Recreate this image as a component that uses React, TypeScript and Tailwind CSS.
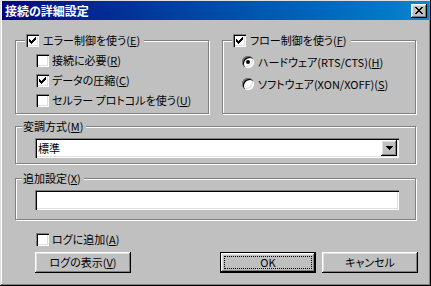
const sunken =
  "shadow-[inset_1px_1px_0_#808080,inset_2px_2px_0_#000,inset_-1px_-1px_0_#fff,inset_-2px_-2px_0_#dfdfdf]";
const raised =
  "shadow-[inset_-1px_-1px_0_#000,inset_1px_1px_0_#fff,inset_-2px_-2px_0_#808080,inset_2px_2px_0_#dfdfdf]";
const etched = "border border-[#808080] shadow-[inset_1px_1px_0_#fff,1px_1px_0_#fff]";

function Check({ checked }: { checked?: boolean }) {
  return (
    <span className={`w-[13px] h-[13px] shrink-0 bg-white flex items-center justify-center ${sunken}`}>
      {checked && (
        <svg width="7" height="7" viewBox="0 0 7 7" shapeRendering="crispEdges">
          <rect x="0" y="2" width="1" height="3" fill="#000" />
          <rect x="1" y="3" width="1" height="3" fill="#000" />
          <rect x="2" y="4" width="1" height="3" fill="#000" />
          <rect x="3" y="3" width="1" height="3" fill="#000" />
          <rect x="4" y="2" width="1" height="3" fill="#000" />
          <rect x="5" y="1" width="1" height="3" fill="#000" />
          <rect x="6" y="0" width="1" height="3" fill="#000" />
        </svg>
      )}
    </span>
  );
}

function Radio({ checked }: { checked?: boolean }) {
  return (
    <span className={`w-[12px] h-[12px] shrink-0 rounded-full bg-white flex items-center justify-center ${sunken}`}>
      {checked && <span className="w-[4px] h-[4px] rounded-full bg-black" />}
    </span>
  );
}

// letter with the mnemonic underline
function Mn({ k }: { k: string }) {
  return (
    <>
      (<u className="underline-offset-[1px]">{k}</u>)
    </>
  );
}

function Button({ children, isDefault }: { children: React.ReactNode; isDefault?: boolean }) {
  if (isDefault) {
    return (
      <div className="w-[96px] h-[21px] shrink-0 border border-black">
        <div className={`w-full h-full p-[3px] ${raised}`}>
          <div className="w-full h-full border border-dotted border-black flex items-center justify-center leading-none">
            {children}
          </div>
        </div>
      </div>
    );
  }
  return (
    <div className={`w-[96px] h-[21px] shrink-0 flex items-center justify-center leading-none ${raised}`}>
      {children}
    </div>
  );
}

export default function App() {
  return (
    <div className="w-[431px] h-[286px] bg-[#c0c0c0] text-black text-[11px] font-['Noto_Sans_CJK_JP',sans-serif] [font-feature-settings:'palt'] p-[2px] pt-[1px] shadow-[inset_-1px_-1px_0_#000,inset_1px_1px_0_#dfdfdf,inset_-2px_-2px_0_#808080,inset_2px_2px_0_#fff]">
      <div className="h-[19px] flex items-center pl-[3px] pr-[2px] bg-linear-to-r from-[#000080] to-[#1084d0]">
        <span className="text-white text-[12px] font-bold leading-none">接続の詳細設定</span>
        <div className={`ml-auto w-[16px] h-[14px] bg-[#c0c0c0] flex items-center justify-center ${raised}`}>
          <svg width="8" height="7" viewBox="0 0 8 7" shapeRendering="crispEdges">
            <rect x="0" y="0" width="2" height="1" fill="#000" />
            <rect x="6" y="0" width="2" height="1" fill="#000" />
            <rect x="1" y="1" width="2" height="1" fill="#000" />
            <rect x="5" y="1" width="2" height="1" fill="#000" />
            <rect x="2" y="2" width="4" height="1" fill="#000" />
            <rect x="3" y="3" width="2" height="1" fill="#000" />
            <rect x="2" y="4" width="4" height="1" fill="#000" />
            <rect x="1" y="5" width="2" height="1" fill="#000" />
            <rect x="5" y="5" width="2" height="1" fill="#000" />
            <rect x="0" y="6" width="2" height="1" fill="#000" />
            <rect x="6" y="6" width="2" height="1" fill="#000" />
          </svg>
        </div>
      </div>

      <div className="pl-[13px] pr-[13px] pt-[14px]">
        <div className="flex gap-[13px]">
          <fieldset className={`w-[194px] h-[80px] ${etched}`}>
            <legend className="ml-[9px] px-[1px] pr-[4px] bg-[#c0c0c0] h-[13px] flex items-center gap-[4px] leading-[13px]">
              <Check checked />
              <span>エラー制御を使う<Mn k="E" /></span>
            </legend>
            <div className="pl-[20px] pt-[3px] flex flex-col">
              <label className="h-[20px] flex items-center gap-[3px]">
                <Check />
                <span>接続に必要<Mn k="R" /></span>
              </label>
              <label className="h-[20px] flex items-center gap-[3px]">
                <Check checked />
                <span>データの圧縮<Mn k="C" /></span>
              </label>
              <label className="h-[20px] flex items-center gap-[3px]">
                <Check />
                <span>セルラー プロトコルを使う<Mn k="U" /></span>
              </label>
            </div>
          </fieldset>

          <fieldset className={`w-[194px] h-[80px] ${etched}`}>
            <legend className="ml-[9px] px-[1px] pr-[4px] bg-[#c0c0c0] h-[13px] flex items-center gap-[4px] leading-[13px]">
              <Check checked />
              <span>フロー制御を使う<Mn k="F" /></span>
            </legend>
            <div className="pl-[19px] pt-[4px] flex flex-col">
              <label className="h-[22px] flex items-center gap-[4px]">
                <Radio checked />
                <span>ハードウェア(RTS/CTS)<Mn k="H" /></span>
              </label>
              <label className="h-[22px] flex items-center gap-[4px]">
                <Radio />
                <span>ソフトウェア(XON/XOFF)<Mn k="S" /></span>
              </label>
            </div>
          </fieldset>
        </div>

        <fieldset className={`mt-[6px] h-[44px] ${etched}`}>
          <legend className="ml-[6px] pl-[1px] pr-[3px] bg-[#c0c0c0] h-[13px] leading-[13px]">
            変調方式<Mn k="M" />
          </legend>
          <div className={`mt-[5px] ml-[19px] w-[364px] h-[20px] bg-white flex items-center pl-[3px] pr-[2px] ${sunken}`}>
            <span className="leading-none">標準</span>
            <div className={`ml-auto w-[16px] h-[16px] bg-[#c0c0c0] flex items-center justify-center ${raised}`}>
              <svg width="7" height="4" viewBox="0 0 7 4" shapeRendering="crispEdges">
                <rect x="0" y="0" width="7" height="1" fill="#000" />
                <rect x="1" y="1" width="5" height="1" fill="#000" />
                <rect x="2" y="2" width="3" height="1" fill="#000" />
                <rect x="3" y="3" width="1" height="1" fill="#000" />
              </svg>
            </div>
          </div>
        </fieldset>

        <fieldset className={`mt-[8px] h-[48px] ${etched}`}>
          <legend className="ml-[6px] pl-[1px] pr-[3px] bg-[#c0c0c0] h-[13px] leading-[13px]">
            追加設定<Mn k="X" />
          </legend>
          <div className={`mt-[5px] ml-[19px] w-[364px] h-[20px] bg-white ${sunken}`} />
        </fieldset>

        <label className="mt-[13px] pl-[21px] h-[13px] flex items-center gap-[3px]">
          <Check />
          <span className="leading-[13px]">ログに追加<Mn k="A" /></span>
        </label>

        <div className="mt-[6px] pl-[20px] flex">
          <Button>
            ログの表示<Mn k="V" />
          </Button>
          <div className="ml-[89px]">
            <Button isDefault>OK</Button>
          </div>
          <div className="ml-[6px]">
            <Button>キャンセル</Button>
          </div>
        </div>
      </div>
    </div>
  );
}
